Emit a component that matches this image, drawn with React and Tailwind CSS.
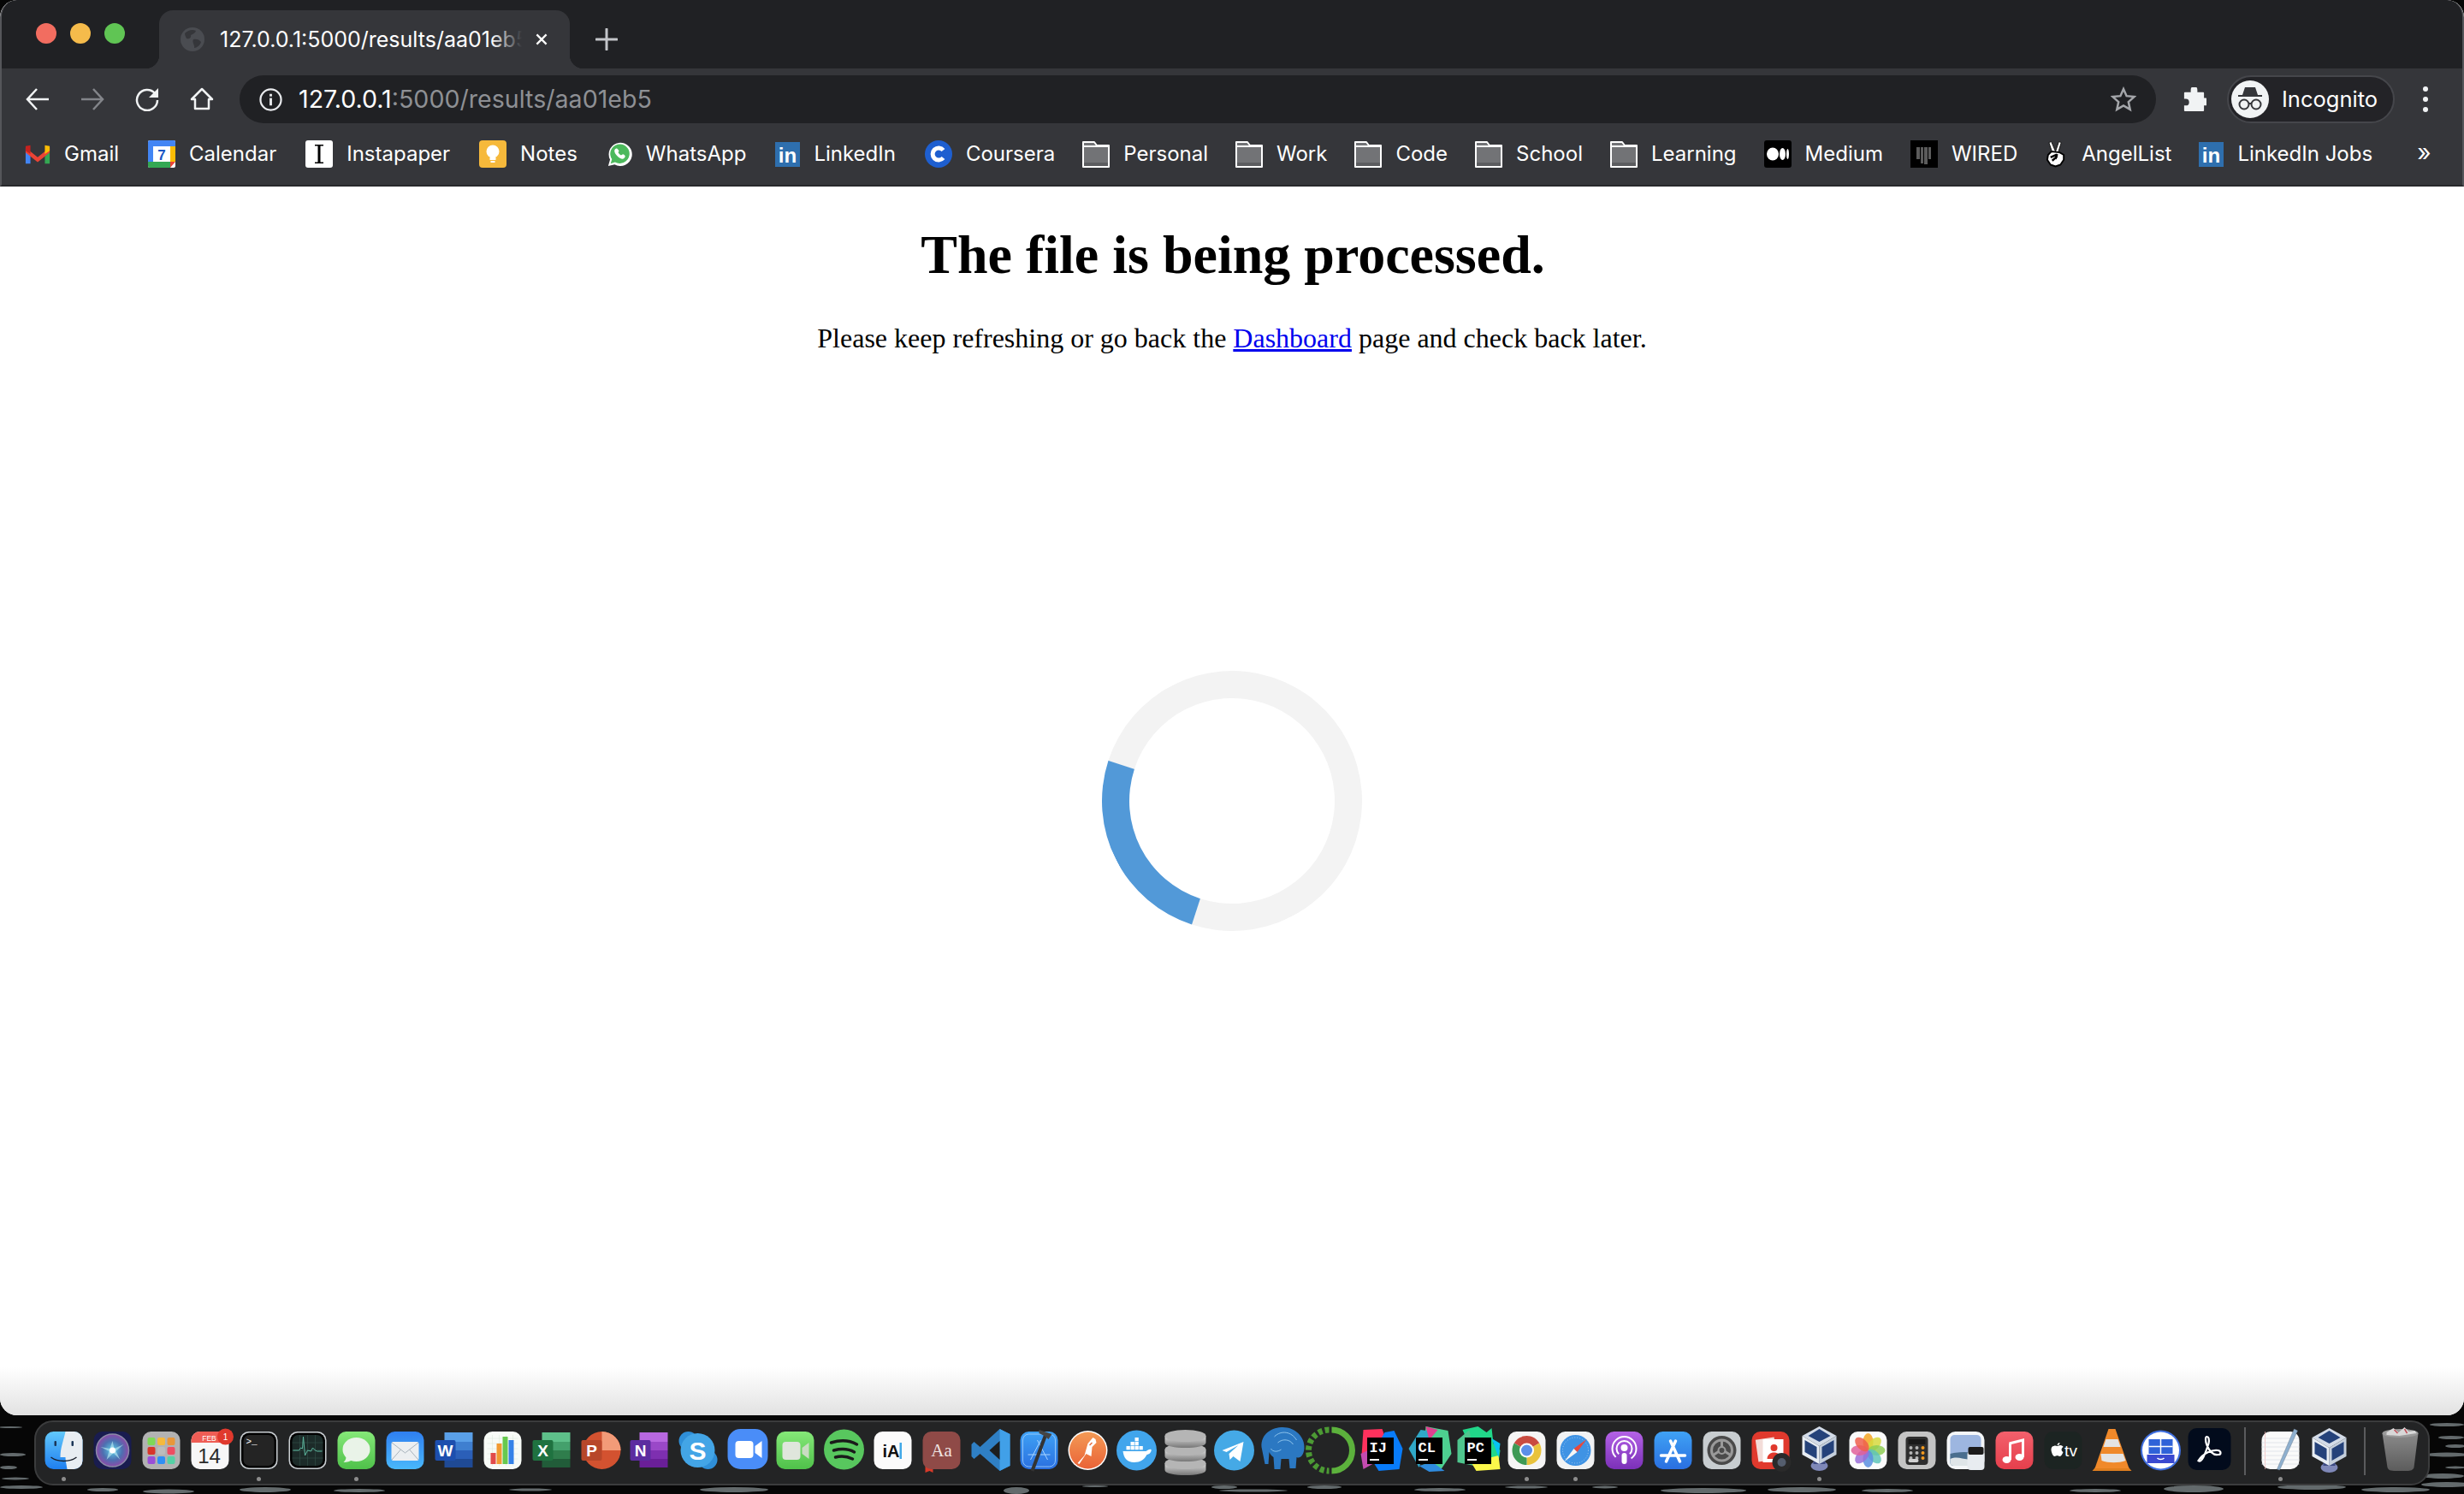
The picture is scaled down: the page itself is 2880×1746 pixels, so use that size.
// App.jsx
import React from "react";

const folder = (
  <svg viewBox="0 0 32 32" className="w-8 h-8">
    <path d="M1 2h13l3 4h14v25H1z" fill="#727376" stroke="#fff" strokeWidth="2" strokeLinejoin="round" />
    <path d="M2 7h28" stroke="#fff" strokeWidth="2" />
    <rect x="2" y="26" width="28" height="4" fill="#5b5c5f" />
  </svg>
);

const linkedin = (
  <svg viewBox="0 0 30 30" className="w-[29px] h-[29px]">
    <rect width="30" height="30" fill="#2e6fae" />
    <text x="15" y="25" textAnchor="middle" fontFamily="Liberation Sans" fontWeight="700" fontSize="25" fill="#fff">in</text>
  </svg>
);

const bookmarks = [
  {
    name: "Gmail",
    icon: (
      <svg viewBox="0 0 32 32" className="w-[30px] h-8">
        <path d="M1 9v19h6V14z" fill="#4285f4" />
        <path d="M31 9v19h-6V14z" fill="#34a853" />
        <path d="M1 8l15 12L31 8v6L16 26 7 19 1 14z" fill="#ea4335" />
        <path d="M25 5l6 1v6l-6 4z" fill="#fbbc04" />
        <path d="M7 5L1 6v6l6 4z" fill="#c5221f" />
      </svg>
    ),
  },
  {
    name: "Calendar",
    icon: (
      <svg viewBox="0 0 32 32" className="w-8 h-8">
        <rect width="32" height="32" rx="2" fill="#fff" />
        <path d="M0 2a2 2 0 012-2h28a2 2 0 012 2v5H0z" fill="#4285f4" />
        <path d="M0 7h6v18H0z" fill="#4285f4" />
        <path d="M26 7h6v18h-6z" fill="#fbbc04" />
        <path d="M0 25h26v7H2a2 2 0 01-2-2z" fill="#34a853" />
        <path d="M26 25h6l-6 7z" fill="#ea4335" />
        <text x="16" y="23" textAnchor="middle" fontFamily="Liberation Sans" fontWeight="700" fontSize="17" fill="#1a56c4">7</text>
      </svg>
    ),
  },
  {
    name: "Instapaper",
    icon: (
      <svg viewBox="0 0 32 32" className="w-8 h-8">
        <rect width="32" height="32" rx="3" fill="#fff" />
        <path d="M11 5h10v1.5h-3.5v19H21V27H11v-1.500h3.500v-19H11z" fill="#000" />
      </svg>
    ),
  },
  {
    name: "Notes",
    icon: (
      <svg viewBox="0 0 32 32" className="w-8 h-8">
        <rect width="32" height="32" rx="4" fill="#f6b93b" />
        <circle cx="16" cy="13" r="7.500" fill="#fff" />
        <rect x="12.500" y="20" width="7" height="3" fill="#fff" />
        <rect x="13.500" y="24" width="5" height="2" fill="#fff" />
      </svg>
    ),
  },
  {
    name: "WhatsApp",
    icon: (
      <svg viewBox="0 0 32 32" className="w-[30px] h-8">
        <path d="M2 31l2.300-8A14.500 14.500 0 1110 29z" fill="#fff" />
        <path d="M5 28l1.700-5.500A12 12 0 1110.500 26z" fill="#4cb95c" />
        <path d="M12 9c-3 1-3 5 1 9s7 5 9 3 1-3 0-4-2-1-3 0-2 0-3-1-2-2-1-3 0-2-1-3-1-1-2-1z" fill="#fff" />
      </svg>
    ),
  },
  { name: "LinkedIn", icon: linkedin },
  {
    name: "Coursera",
    icon: (
      <svg viewBox="0 0 32 32" className="w-8 h-8">
        <circle cx="16" cy="16" r="16" fill="#1e5fd0" />
        <path d="M21.500 20.500a7 7 0 110-9" fill="none" stroke="#fff" strokeWidth="5" />
      </svg>
    ),
  },
  { name: "Personal", icon: folder },
  { name: "Work", icon: folder },
  { name: "Code", icon: folder },
  { name: "School", icon: folder },
  { name: "Learning", icon: folder },
  {
    name: "Medium",
    icon: (
      <svg viewBox="0 0 32 32" className="w-8 h-8">
        <rect width="32" height="32" rx="3" fill="#000" />
        <ellipse cx="10" cy="16" rx="7" ry="7.500" fill="#fff" />
        <ellipse cx="21.500" cy="16" rx="3.500" ry="7" fill="#fff" />
        <ellipse cx="27.500" cy="16" rx="1.500" ry="6" fill="#fff" />
      </svg>
    ),
  },
  {
    name: "WIRED",
    icon: (
      <svg viewBox="0 0 32 32" className="w-8 h-8">
        <rect width="32" height="32" fill="#000" />
        <path d="M7 8h4v14H7zM12 8h3v19h-3zM16 8h4v20h-4zM21 8h3v14h-3z" fill="#5c5c5c" />
      </svg>
    ),
  },
  {
    name: "AngelList",
    icon: (
      <svg viewBox="0 0 28 32" className="w-[27px] h-8">
        <path d="M9 14L5 2l3-1 5 12 4-12 3 1-4 13" fill="#fff" stroke="#111" strokeWidth="1" />
        <path d="M4 17l4-4 10 1 5 3v6l-4 6-6 2-6-2-4-6z" fill="#fff" stroke="#000" strokeWidth="2" />
        <path d="M7 20l7-3M9 24l6-5M15 16l-2 6" stroke="#000" strokeWidth="2.500" fill="none" />
      </svg>
    ),
  },
  { name: "LinkedIn Jobs", icon: linkedin },
];

const R = ({ fill, rx = 10 }) => <rect width="44" height="44" rx={rx} fill={fill} />;
const T = ({ x, y, s, w = 400, c = "#fff", f = "Liberation Sans", a = "middle", children }) => (
  <text x={x} y={y} fontSize={s} fontWeight={w} fill={c} fontFamily={f} textAnchor={a}>
    {children}
  </text>
);

const msStack = (a, b, c, d, front, letter) => (
  <>
    <path d={`M11 1h33v11H11z`} fill={a} />
    <path d="M11 12h33v10H11z" fill={b} />
    <path d="M11 22h33v10H11z" fill={c} />
    <path d="M11 32h33v10H11z" fill={d} />
    <rect x="0" y="10" width="24" height="24" rx="2" fill={front} />
    <T x="12" y="29" s="19" w={700}>{letter}</T>
  </>
);

const jetbrains = (polys, label) => (
  <>
    {polys.map(([points, fill]) => (
      <polygon key={points} points={points} fill={fill} />
    ))}
    <rect x="6.500" y="7" width="31" height="31" fill="#000" />
    <T x="9" y="24" s="17" w={700} a="start" f="Liberation Mono">{label}</T>
    <rect x="9.500" y="32" width="11" height="2" fill="#fff" />
  </>
);

const vbox = (
  <>
    <ellipse cx="22" cy="40" rx="10" ry="6" fill="#7f88b8" />
    <rect x="15" y="32" width="14" height="6" fill="#3d4a83" />
    <polygon points="22,-6 42,5 22,17 2,5" fill="#d4dce8" />
    <polygon points="22,-3 35,5 22,12 9,5" fill="#25427a" />
    <polygon points="2,5 22,17 22,38 2,27" fill="#e8edf3" />
    <polygon points="42,5 22,17 22,38 42,27" fill="#c5cfdc" />
    <polygon points="5,10 19,18 19,32 5,24" fill="#25427a" />
    <polygon points="39,10 25,18 25,32 39,24" fill="#25427a" />
  </>
);

const dockApps = [
  {
    dot: true,
    art: (
      <>
        <R fill="url(#gFinder)" />
        <path d="M24 0h10a10 10 0 0110 10v24a10 10 0 01-10 10h-8c-1-6-2-10-2-14h-6c0-11 4-20 6-30z" fill="#e8edf2" />
        <rect x="11" y="11" width="2.500" height="6" rx="1" fill="#1b3557" />
        <rect x="31" y="11" width="2.500" height="6" rx="1" fill="#1b3557" />
        <path d="M7 30c8 6 22 6 30 0" fill="none" stroke="#1a1f2b" strokeWidth="1.500" />
      </>
    ),
  },
  {
    art: (
      <>
        <R fill="#191c4f" />
        <circle cx="22" cy="22" r="19" fill="url(#gSiri)" stroke="#8b8ba8" strokeWidth="1.500" />
        <path d="M22 11l2 9 11-5-9 8 5 10-8-8-8 8 3-10-10-5 11 2z" fill="#bff0f5" opacity=".6" />
        <circle cx="22" cy="22" r="3.500" fill="#fff" />
      </>
    ),
  },
  {
    art: (
      <>
        <R fill="#b2b2b2" />
        {["#7ed957", "#f5b93c", "#e8973a", "#d8352a", "#bcbcbc", "#ee4d62", "#9a4fd8", "#2f8ff5", "#55d1a5"].map((c, i) => (
          <rect key={c} x={6 + (i % 3) * 11.500} y={7 + Math.floor(i / 3) * 11} width="9" height="9" rx="2" fill={c} />
        ))}
      </>
    ),
  },
  {
    art: (
      <>
        <R fill="#f7f7f7" />
        <path d="M0 13V10A10 10 0 0110 0h24a10 10 0 0110 10v3z" fill="#ee5d55" />
        <T x="21" y="11" s="8.500" w={500}>FEB</T>
        <T x="21" y="37" s="24" c="#2b2b2b">14</T>
        <circle cx="40" cy="6" r="9.500" fill="#e0392d" />
        <T x="40" y="10" s="10">1</T>
      </>
    ),
  },
  {
    dot: true,
    art: (
      <>
        <R fill="#c9ced2" />
        <rect x="1.500" y="1.500" width="41" height="41" rx="9" fill="#000" />
        <rect x="4" y="4" width="36" height="36" rx="7" fill="#242424" />
        <T x="7" y="15" s="11" a="start" f="Liberation Mono">{">_"}</T>
      </>
    ),
  },
  {
    art: (
      <>
        <R fill="#c9ced2" />
        <rect x="1.500" y="1.500" width="41" height="41" rx="9" fill="#000" />
        <rect x="4" y="4" width="36" height="36" rx="7" fill="#1c2b29" />
        <path d="M4 13h36M4 22h36M4 31h36M13 4v36M22 4v36M31 4v36" stroke="#33504a" strokeWidth=".6" />
        <path d="M5 22h7l2-3 2 1 1-14 2 22 3-6 4 1 2-4 3 3 2 1h6" fill="none" stroke="#5db89f" strokeWidth="1" />
      </>
    ),
  },
  {
    dot: true,
    art: (
      <>
        <R fill="url(#gMessages)" />
        <ellipse cx="22" cy="21" rx="16" ry="14" fill="#e9f3e8" />
        <path d="M10 30c0 3-2 5-3 6 4 0 8-1 10-3z" fill="#e9f3e8" />
      </>
    ),
  },
  {
    art: (
      <>
        <R fill="url(#gMail)" />
        <rect x="6" y="12" width="32" height="22" rx="2" fill="#eceff1" />
        <path d="M6.500 13L22 25l15.500-12M6.500 33L17 21M37.500 33L27 21" fill="none" stroke="#a9b4bd" strokeWidth="1" />
      </>
    ),
  },
  { art: msStack("#5aa0e8", "#3f7fd0", "#2b5fb8", "#1f4a95", "#1d4fae", "W") },
  {
    art: (
      <>
        <R fill="#f8fbf7" />
        <path d="M4 8h36M4 14h36M4 20h36M4 26h36M4 32h36M10 4v36M18 4v36M26 4v36M34 4v36" stroke="#d9e6d9" strokeWidth=".5" />
        <rect x="8" y="25" width="6" height="13" fill="#e24b4b" />
        <rect x="15" y="14" width="6" height="24" fill="#f29a32" />
        <rect x="22" y="6" width="6" height="32" fill="#67c94f" />
        <rect x="29" y="10" width="6" height="28" fill="#3582e8" />
      </>
    ),
  },
  { art: msStack("#5ec08a", "#44a06c", "#2f7d4c", "#215c39", "#1f7240", "X") },
  {
    art: (
      <>
        <circle cx="24" cy="22" r="22" fill="#d35230" />
        <path d="M24 0a22 22 0 0122 22H24z" fill="#f29b78" />
        <rect x="0" y="10" width="24" height="24" rx="2" fill="#b7472a" />
        <T x="12" y="29" s="19" w={700}>P</T>
      </>
    ),
  },
  { art: msStack("#b868e0", "#9a48c8", "#7e2fb0", "#6a1f98", "#5c2da0", "N") },
  {
    art: (
      <>
        <circle cx="11" cy="11" r="11" fill="#2f8fd8" />
        <circle cx="34" cy="33" r="11" fill="#2f8fd8" />
        <circle cx="22" cy="22" r="20" fill="#43a5e6" />
        <T x="22" y="33" s="30" w={700}>S</T>
      </>
    ),
  },
  {
    art: (
      <>
        <rect y="-3" width="47" height="47" rx="15" fill="#4a8df8" />
        <rect x="9" y="11" width="21" height="20" rx="4" fill="#fff" />
        <path d="M32 17l8-6v20l-8-6z" fill="#fff" />
      </>
    ),
  },
  {
    art: (
      <>
        <R fill="url(#gMessages)" />
        <rect x="7" y="12" width="21" height="21" rx="4" fill="#dfe6dc" />
        <path d="M30 19l8-6v19l-8-6z" fill="#c9dcc2" />
      </>
    ),
  },
  {
    art: (
      <>
        <circle cx="22" cy="21" r="23.500" fill="#58c75e" />
        <path d="M7 13c10-3 21-3 30 2M10 22c8-2 17-2 24 2M12 30c7-2 14-1 20 2" fill="none" stroke="#1a1a1a" strokeWidth="3.500" strokeLinecap="round" />
      </>
    ),
  },
  {
    art: (
      <>
        <R fill="#fbfbfb" />
        <T x="20" y="30" s="20" w={700} c="#111">iA</T>
        <rect x="30" y="13" width="2.500" height="19" fill="#40a8e8" />
      </>
    ),
  },
  {
    art: (
      <>
        <path d="M3 40h9v8l-4-2-5 2z" fill="#d83a2a" />
        <R fill="#8f4a47" />
        <T x="22" y="29" s="21" f="Liberation Serif" c="#efe3e0">Aa</T>
      </>
    ),
  },
  {
    art: (
      <>
        <path d="M33 -3l12 6v37l-12 6L10 26 3 32l-3-3v-14l3-3 7 6z" fill="#2f7fc4" />
        <path d="M33 -3l12 6v37l-12 6z" fill="#41a0e8" />
        <path d="M33 11L21 22l12 11z" fill="#1c1d1e" />
      </>
    ),
  },
  {
    art: (
      <>
        <R fill="url(#gApp)" />
        <rect x="3" y="3" width="38" height="38" rx="7" fill="none" stroke="#a8d4ff" strokeWidth=".8" />
        <path d="M12 33L24 10M32 33L20 10M9 27h26" stroke="#a8d4ff" strokeWidth="1" fill="none" />
        <path d="M14 46L30 3" stroke="#333" strokeWidth="4" />
        <path d="M22 -2l15 5-4 6-5-4-6-3z" fill="#444" />
      </>
    ),
  },
  {
    art: (
      <>
        <circle cx="22" cy="22" r="23" fill="#fff" />
        <circle cx="22" cy="22" r="21.500" fill="url(#gPostman)" />
        <path d="M10 37l8-9 4-14 6-7 3 2 1 4-5 5-1 11-6-3-8 12z" fill="#fff" />
        <path d="M24 16l3-3" stroke="#e86a3a" strokeWidth="1.500" />
      </>
    ),
  },
  {
    art: (
      <>
        <circle cx="22" cy="22" r="23.500" fill="#41a5ec" />
        <path d="M6 23h27c2-1 4-3 6-2 1 2-2 6-5 6-3 6-8 9-15 9-8 0-12-5-13-13z" fill="#fff" />
        {[[10, 17], [15, 17], [20, 17], [25, 17], [15, 12], [20, 12], [20, 7]].map(([x, y]) => (
          <rect key={`${x}-${y}`} x={x} y={y} width="4.300" height="4.300" fill="#fff" />
        ))}
      </>
    ),
  },
  {
    art: (
      <>
        {[34, 18, 2].map((y) => (
          <g key={y}>
            <path d={`M-2 ${y + 3}v8c0 8 48 8 48 0v-8z`} fill="url(#gDb)" />
            <ellipse cx="22" cy={y + 3} rx="24" ry="7" fill="#b5b5b5" />
          </g>
        ))}
      </>
    ),
  },
  {
    art: (
      <>
        <circle cx="22" cy="22" r="23.500" fill="#45a9e6" />
        <path d="M8 22l25-10-4 23-8-6-4 4-1-7 11-10-14 8z" fill="#fff" />
      </>
    ),
  },
  {
    art: (
      <>
        <path d="M-3 18C-4 2 10-5 22-5c14 0 26 11 25 25-1 8-5 12-9 10l-1 13h-7l-1-11h-9l-1 12h-7l-1-14c-3-2-4-4-5-6l-1 14H1z" fill="#2b78c2" />
        <path d="M12 6c8-8 20-6 26 4M16 13c6-5 14-4 18 2M8 20c2 4 8 4 12 1" fill="none" stroke="#8fc5ec" strokeWidth="1" />
      </>
    ),
  },
  {
    art: (
      <>
        <path d="M22 -2a24 24 0 110 48" fill="none" stroke="#5cb13c" strokeWidth="7" />
        <path d="M19 -2a24 24 0 000 48" fill="none" stroke="#4c9a34" strokeWidth="7" strokeDasharray="5 3" />
      </>
    ),
  },
  {
    art: jetbrains(
      [
        ["2,-2 24,-3 30,14 0,28", "#fe315d"],
        ["27,1 38,-1 48,20 44,44 20,46 10,30", "#087cfa"],
        ["-1,26 12,20 20,34 2,44", "#c44bb0"],
      ],
      "IJ"
    ),
  },
  {
    art: jetbrains(
      [
        ["18,-6 44,-1 48,26 36,44 14,38", "#4dd090"],
        ["-2,20 12,-2 26,0 10,42", "#2fa8c8"],
        ["18,-6 32,-2 22,10", "#e0408f"],
        ["10,40 26,36 40,46 22,47", "#2f8ce0"],
      ],
      "CL"
    ),
  },
  {
    art: jetbrains(
      [
        ["4,-2 22,-6 32,1 38,-4 40,14 48,22 46,36 20,34", "#21d789"],
        ["-2,10 12,-2 18,40 -2,36", "#4fc68e"],
        ["14,36 46,28 48,44 20,46", "#fcf84a"],
        ["38,8 48,14 46,30", "#07c3f2"],
      ],
      "PC"
    ),
  },
  {
    dot: true,
    art: (
      <>
        <R fill="#f5f5f5" />
        <path d="M22 22L7.300 13.500a17 17 0 0129.400 0z" fill="#c94b40" />
        <path d="M22 22l14.700-8.500A17 17 0 0122 39z" fill="#e9c33d" />
        <path d="M22 22v17A17 17 0 017.300 13.500z" fill="#3e9a55" />
        <circle cx="22" cy="22" r="8.500" fill="#fff" />
        <circle cx="22" cy="22" r="6.500" fill="#5b8fe8" />
      </>
    ),
  },
  {
    dot: true,
    art: (
      <>
        <R fill="#f1f2f3" />
        <circle cx="22" cy="22" r="18" fill="#3f93e4" />
        <circle cx="22" cy="22" r="15" fill="none" stroke="#9fcbf3" strokeWidth="1" strokeDasharray="1 2" />
        <polygon points="35,9 24,24 20,20" fill="#e8483c" />
        <polygon points="9,35 24,24 20,20" fill="#f5f5f5" />
      </>
    ),
  },
  {
    art: (
      <>
        <R fill="url(#gPodcast)" />
        <circle cx="22" cy="20" r="14" fill="none" stroke="#fff" strokeWidth="2" strokeDasharray="68 20" transform="rotate(135 22 20)" />
        <circle cx="22" cy="20" r="9" fill="none" stroke="#fff" strokeWidth="2" strokeDasharray="42 15" transform="rotate(135 22 20)" />
        <circle cx="22" cy="19" r="4" fill="#fff" />
        <rect x="19" y="25" width="6" height="13" rx="3" fill="#fff" />
      </>
    ),
  },
  {
    art: (
      <>
        <R fill="url(#gApp)" />
        <path d="M14 35L25 11M30 35L19 11M8 28h28" stroke="#fff" strokeWidth="3.500" strokeLinecap="round" fill="none" />
      </>
    ),
  },
  {
    art: (
      <>
        <R fill="#c8cdd0" />
        <circle cx="22" cy="22" r="17" fill="#4a4a4a" />
        <circle cx="22" cy="22" r="12" fill="none" stroke="#9a9a9a" strokeWidth="3" />
        <path d="M22 10v8M11 28l8-5M33 28l-8-5" stroke="#9a9a9a" strokeWidth="3" />
        <circle cx="22" cy="22" r="4" fill="none" stroke="#9a9a9a" strokeWidth="2" />
      </>
    ),
  },
  {
    art: (
      <>
        <R fill="#e0392d" />
        <rect x="6" y="8" width="22" height="26" fill="#f3dcd8" transform="rotate(-8 17 21)" />
        <rect x="13" y="9" width="24" height="27" fill="#fff" />
        <circle cx="26" cy="19" r="4" fill="#e0392d" />
        <path d="M18 32c0-10 16-10 16 0z" fill="#e0392d" />
        <circle cx="35" cy="36" r="11" fill="#2a2a2a" />
        <circle cx="35" cy="36" r="5" fill="#555e6e" />
      </>
    ),
  },
  { dot: true, art: vbox },
  {
    art: (
      <>
        <R fill="#fbfbfb" />
        {[["#f5a623", 0], ["#d7d93e", 45], ["#8fce55", 90], ["#5fc4b8", 135], ["#5a8fe0", 180], ["#9a6dd8", 225], ["#e0609a", 270], ["#ee5f4c", 315]].map(([c, r]) => (
          <ellipse key={c} cx="22" cy="12" rx="6" ry="10" fill={c} opacity=".85" transform={`rotate(${r} 22 22)`} />
        ))}
      </>
    ),
  },
  {
    art: (
      <>
        <R fill="#c4c4c4" />
        <rect x="9" y="6" width="26" height="33" rx="4" fill="#2e2e2e" />
        <rect x="12" y="9" width="20" height="6" fill="#1a1a1a" />
        {[0, 1, 2].map((r) =>
          [0, 1, 2].map((c) => <circle key={`${r}${c}`} cx={15 + c * 7} cy={19 + r * 6} r="2" fill={c === 2 ? "#f39a1f" : "#b5b5b5"} />)
        )}
        <rect x="12" y="32" width="12" height="4" rx="2" fill="#d0d0d0" />
      </>
    ),
  },
  {
    art: (
      <>
        <R fill="#f4f6f8" />
        <rect x="4" y="4" width="36" height="36" rx="5" fill="#9db6e0" />
        <path d="M4 26c12-3 24-2 36 0v10a4 4 0 01-4 4H8a4 4 0 01-4-4z" fill="#4a6e8e" />
        <path d="M4 32c10-4 16 2 24 0v8H8a4 4 0 01-4-4z" fill="#dfe5e8" />
        <rect x="24" y="23" width="20" height="22" rx="4" fill="#e8ecf0" />
        <rect x="25" y="18" width="18" height="9" rx="2" fill="#1b1b1b" />
      </>
    ),
  },
  {
    art: (
      <>
        <R fill="url(#gMusic)" />
        <path d="M16 14l16-4v20" fill="none" stroke="#fff" strokeWidth="3" />
        <path d="M17 14v19" stroke="#fff" strokeWidth="3" />
        <ellipse cx="13" cy="33" rx="5" ry="4" fill="#fff" />
        <ellipse cx="28" cy="30" rx="5" ry="4" fill="#fff" />
      </>
    ),
  },
  {
    art: (
      <>
        <R fill="#1c2422" />
        <path d="M11 17c2-1 3 0 4 0s2-1 4-1c1 0 3 1 3 2-3 2-2 5 0 6-1 3-3 5-4 5s-2-1-3-1-2 1-3 1c-2 0-4-5-4-8 0-2 1-4 3-4zM15 16c0-2 2-3 3-3 0 2-1 3-3 3z" fill="#fff" />
        <T x="31" y="29" s="19">tv</T>
      </>
    ),
  },
  {
    art: (
      <>
        <path d="M-1 46l7-8h32l7 8z" fill="#e07f1f" />
        <path d="M18 -3h8l16 46H2z" fill="#f0892a" />
        <path d="M15 9h14l3 9H12z" fill="#e4e4e4" />
        <path d="M9 26h26l3 8c-8 3-20 3-28 0z" fill="#e4e4e4" />
      </>
    ),
  },
  {
    art: (
      <>
        <circle cx="22" cy="22" r="23.500" fill="#3f6fe0" />
        <circle cx="22" cy="22" r="21.500" fill="#fff" />
        <path d="M8 9h28v17H8z" fill="#2f62d8" />
        <path d="M22 9v17M8 17.500h28" stroke="#fff" strokeWidth="1.500" />
        <path d="M6 27h32v10H6z" fill="#3a49d0" />
        <path d="M18 31c2 2 6 2 8 0" stroke="#fff" strokeWidth="1.500" fill="none" />
      </>
    ),
  },
  {
    art: (
      <>
        <rect x="-3" y="-4" width="50" height="49" rx="10" fill="#020b1c" />
        <path d="M9 34c4 3 8-8 12-20 1-5 0-8-2-8s-2 5 0 10c3 7 7 12 13 11 4 0 4-4 0-5-7-1-17 3-23 12z" fill="none" stroke="#fff" strokeWidth="2.200" />
      </>
    ),
  },
  { sep: true },
  {
    dot: true,
    art: (
      <>
        <R fill="#fafafa" />
        <path d="M4 0v44" stroke="#f0b5b5" strokeWidth=".7" />
        {[8, 13, 18, 23, 28, 33, 38].map((y) => (
          <path key={y} d={`M0 ${y}h44`} stroke="#dcdfe6" strokeWidth=".8" />
        ))}
        <path d="M18 44L38 -3l4 2-21 46z" fill="#8fb0cf" stroke="#6d7f90" strokeWidth=".5" />
      </>
    ),
  },
  { art: <g transform="translate(0 2)">{vbox}</g> },
  { sep: true },
  {
    art: (
      <>
        <path d="M1 2h42l-5 40c-1 3-4 4-8 4H15c-4 0-7-1-8-4z" fill="url(#gTrash)" />
        <ellipse cx="22" cy="2" rx="21" ry="5" fill="#9a9a9a" />
        <path d="M6 1l8-5 6 5 7-6 5 5 7-1 2 3-20 3-15-1z" fill="#d8d8d8" />
        <path d="M15 -2l4 4M27 -3l3 5" stroke="#c0505a" strokeWidth="1.500" />
      </>
    ),
  },
];

const wisps = [
  [12, 1668, 14, 1], [15, 1700, 15, 2], [10, 1715, 10, 2], [18, 1728, 16, 1.5], [25, 1738, 25, 2],
  [120, 1741, 18, 2], [197, 1743, 30, 2.5], [310, 1741, 30, 3], [420, 1742, 30, 2], [620, 1741, 25, 1.5],
  [858, 1741, 40, 3], [1188, 1742, 15, 4], [1280, 1737, 15, 1], [1431, 1738, 15, 2], [1465, 1742, 40, 1.5],
  [1548, 1738, 20, 2], [1683, 1741, 30, 2], [1784, 1738, 25, 1.5], [1876, 1738, 15, 1.5], [1991, 1742, 50, 3],
  [2106, 1741, 40, 3], [2206, 1742, 30, 2], [2449, 1742, 30, 2], [2564, 1740, 35, 4], [2702, 1738, 40, 3],
  [2800, 1741, 40, 3], [2860, 1665, 20, 2], [2865, 1680, 15, 2], [2870, 1690, 12, 2], [2860, 1700, 25, 2.5],
  [2870, 1715, 12, 1.5], [2855, 1725, 25, 3], [2860, 1735, 30, 3],
];

function Defs() {
  const grad = (id, a, b) => (
    <linearGradient id={id} x1="0" y1="0" x2="0" y2="1">
      <stop offset="0" stopColor={a} />
      <stop offset="1" stopColor={b} />
    </linearGradient>
  );
  return (
    <svg className="absolute w-0 h-0">
      <defs>
        {grad("gFinder", "#62c8fb", "#1f7ff0")}
        {grad("gMessages", "#85e878", "#4fc14a")}
        {grad("gMail", "#2f7ff0", "#49b8fb")}
        {grad("gApp", "#3fa2f5", "#2a6fe0")}
        {grad("gPostman", "#f39a55", "#ea6337")}
        {grad("gPodcast", "#b462e6", "#7b30b8")}
        {grad("gMusic", "#f3606c", "#e53f4c")}
        {grad("gDb", "#dcdcdc", "#777")}
        {grad("gTrash", "#8a8a8a", "#5c5c5c")}
        <radialGradient id="gSiri">
          <stop offset="0" stopColor="#5ed0e8" />
          <stop offset=".6" stopColor="#4d6fb0" />
          <stop offset="1" stopColor="#8c4aa8" />
        </radialGradient>
      </defs>
    </svg>
  );
}

function Bookmark({ b }) {
  return (
    <div className="flex items-center gap-4">
      {b.icon}
      <span>{b.name}</span>
    </div>
  );
}

function ChromeTop() {
  return (
    <div className="shrink-0 rounded-t-[20px] overflow-hidden border-x-2 border-[#55565a] border-b-2 border-b-[#27282b] bg-[#35363a] text-white font-['Inter',sans-serif]">
      {/* tab strip */}
      <div className="h-[80px] bg-[#202124] flex">
        <div className="w-[184px] pl-[40px] pt-[27px] flex gap-4 shrink-0">
          <span className="w-6 h-6 rounded-full bg-[#f26d60]" />
          <span className="w-6 h-6 rounded-full bg-[#f5bb4b]" />
          <span className="w-6 h-6 rounded-full bg-[#60c554]" />
        </div>
        <div className="relative mt-3 w-[480px] h-[68px] bg-[#35363a] rounded-t-2xl flex items-center pl-[25px] before:content-[''] before:absolute before:bottom-0 before:-left-4 before:w-4 before:h-4 before:bg-[radial-gradient(circle_at_0_0,transparent_16px,#35363a_16.500px)] after:content-[''] after:absolute after:bottom-0 after:-right-4 after:w-4 after:h-4 after:bg-[radial-gradient(circle_at_100%_0,transparent_16px,#35363a_16.500px)]">
          <svg viewBox="0 0 28 28" className="w-7 h-7 shrink-0">
            <circle cx="14" cy="14" r="14" fill="#4a4c51" />
            <path d="M5 7c4-4 9-5 13-3-1 3-4 4-6 5 1 3-2 5-5 4-1-2-2-4-2-6zM15 14c3-1 7 0 9 3-1 4-5 7-8 7 1-3-3-7-1-10z" fill="#35363a" />
          </svg>
          <div className="relative ml-[18px] w-[353px] overflow-hidden whitespace-nowrap text-[25px] leading-[32px]">
            127.0.0.1:5000/results/aa01eb5
            <span className="absolute right-0 top-0 bottom-0 w-9 bg-gradient-to-r from-transparent to-[#35363a]" />
          </div>
          <svg viewBox="0 0 20 20" className="w-4 h-4 ml-[15px] shrink-0">
            <path d="M3 3l14 14M17 3L3 17" stroke="#fff" strokeWidth="2.800" />
          </svg>
        </div>
        <div className="ml-[30px] pt-[33px]">
          <svg viewBox="0 0 26 26" className="w-[26px] h-[26px]">
            <path d="M13 1v24M1 13h24" stroke="#c3c5c9" strokeWidth="3" strokeLinecap="round" />
          </svg>
        </div>
      </div>
      {/* toolbar */}
      <div className="h-[64px] pt-2 pl-[10px] pr-[11px] flex">
        <div className="w-16 h-14 flex items-center justify-center">
          <svg viewBox="0 0 28 28" className="w-7 h-7">
            <path d="M27 14H2M13 2L2 14l11 12" fill="none" stroke="#f1f3f4" strokeWidth="2.500" />
          </svg>
        </div>
        <div className="w-16 h-14 flex items-center justify-center">
          <svg viewBox="0 0 28 28" className="w-7 h-7">
            <path d="M1 14h25M15 2l11 12-11 12" fill="none" stroke="#83858a" strokeWidth="2.500" />
          </svg>
        </div>
        <div className="w-16 h-14 flex items-center justify-center">
          <svg viewBox="0 0 28 28" className="w-7 h-7">
            <path d="M23 7A12 12 0 1026 15" fill="none" stroke="#f1f3f4" strokeWidth="2.500" />
            <path d="M27 1v11H16z" fill="#f1f3f4" />
          </svg>
        </div>
        <div className="w-16 h-14 flex items-center justify-center">
          <svg viewBox="0 0 28 28" className="w-7 h-7">
            <path d="M14 2L2 14h4v11h16V14h4z" fill="none" stroke="#f1f3f4" strokeWidth="2.500" strokeLinejoin="round" />
          </svg>
        </div>
        <div className="ml-3 flex-1 h-14 rounded-full bg-[#202124] flex items-center pl-[23px] pr-[23px]">
          <svg viewBox="0 0 28 28" className="w-[27px] h-[27px] shrink-0">
            <circle cx="14" cy="14" r="12.500" fill="none" stroke="#e8eaed" strokeWidth="2.300" />
            <rect x="12.500" y="12" width="3" height="9" fill="#e8eaed" />
            <rect x="12.500" y="7" width="3" height="3" fill="#e8eaed" />
          </svg>
          <div className="ml-[19px] text-[28.6px] text-white">
            127.0.0.1<span className="text-[#8e9094]">:5000/results/aa01eb5</span>
          </div>
          <svg viewBox="0 0 30 30" className="ml-auto w-[30px] h-[30px]">
            <path d="M15 3l3.600 8.200 8.900.9-6.700 6 1.900 8.800L15 22.400l-7.700 4.500 1.900-8.800-6.700-6 8.900-.9z" fill="none" stroke="#a4a6aa" strokeWidth="2.500" />
          </svg>
        </div>
        <div className="ml-3 w-16 h-14 flex items-center justify-center">
          <svg viewBox="0 0 30 30" className="w-[29px] h-[29px]">
            <path d="M11 3a4 4 0 018 0v3h7a1 1 0 011 1v6h2a4.500 4.500 0 010 9h-2v6a1 1 0 01-1 1H4a1 1 0 01-1-1v-6h2a4 4 0 000-8H3V7a1 1 0 011-1h7z" fill="#f1f3f4" />
          </svg>
        </div>
        <div className="ml-[7px] w-[196px] h-14 rounded-full bg-[#232327] border-2 border-[#45464b] flex items-center pl-[3px]">
          <svg viewBox="0 0 44 44" className="w-11 h-11 shrink-0">
            <circle cx="22" cy="22" r="22" fill="#f1f3f4" />
            <path d="M13 17l3-9h12l3 9z" fill="#35363a" />
            <path d="M8 18h28" stroke="#35363a" strokeWidth="2" />
            <circle cx="15" cy="28" r="5.500" fill="none" stroke="#35363a" strokeWidth="2" />
            <circle cx="29" cy="28" r="5.500" fill="none" stroke="#35363a" strokeWidth="2" />
            <path d="M20 27h4" stroke="#35363a" strokeWidth="2" />
          </svg>
          <span className="ml-[15px] text-[25.5px]">Incognito</span>
        </div>
        <div className="ml-1 w-16 h-14 flex flex-col items-center justify-center gap-[6px]">
          <span className="w-[6px] h-[6px] rounded-full bg-[#f1f3f4]" />
          <span className="w-[6px] h-[6px] rounded-full bg-[#f1f3f4]" />
          <span className="w-[6px] h-[6px] rounded-full bg-[#f1f3f4]" />
        </div>
      </div>
      {/* bookmarks */}
      <div className="h-[72px] pl-[27px] flex items-center text-[24px] whitespace-nowrap">
        <div className="flex items-center gap-[34px]">
          {bookmarks.slice(0, 7).map((b) => (
            <Bookmark key={b.name} b={b} />
          ))}
        </div>
        <div className="ml-8 flex items-center gap-8">
          {bookmarks.slice(7).map((b) => (
            <Bookmark key={b.name} b={b} />
          ))}
        </div>
        <span className="ml-[52px] text-[28px] pb-1">»</span>
      </div>
    </div>
  );
}

function Dock() {
  return (
    <div className="relative ml-[40px] mt-[6px] w-[2800px] h-[76px] rounded-[22px] border-2 border-[#3b3c3d] bg-[#232425] pt-1 pl-[4px] flex">
      {dockApps.map((app, i) =>
        app.sep ? (
          <div key={i} className="mx-[12px] mt-[2px] w-[2px] h-[56px] bg-[#5a5b5d]" />
        ) : (
          <div key={i} className="w-[57px] shrink-0 flex flex-col items-center">
            <svg viewBox="0 0 57 56" className="w-[57px] h-[56px] overflow-visible">
              <g transform="translate(6.500 7)">{app.art}</g>
            </svg>
            {app.dot && <span className="mt-1 w-[5px] h-[5px] rounded-full bg-[#8c8c8c]" />}
          </div>
        )
      )}
    </div>
  );
}

export default function App() {
  return (
    <div className="relative w-[2880px] h-[1746px] overflow-hidden bg-[#060606]">
      <Defs />
      {/* wallpaper */}
      <svg viewBox="0 0 2880 1746" className="absolute inset-0 w-[2880px] h-[1746px]">
        {wisps.map(([cx, cy, rx, ry]) => (
          <ellipse key={`${cx}-${cy}`} cx={cx} cy={cy} rx={rx} ry={ry} fill="#8b9599" opacity=".7" />
        ))}
      </svg>
      <div className="relative h-[1654px] rounded-[20px] overflow-hidden bg-white flex flex-col">
        <ChromeTop />
        <main className="flex-1 flex flex-col items-center font-['Liberation_Serif',serif] text-black">
          <h1 className="mt-[43px] ml-[2px] text-[64px] leading-[73px] font-bold">The file is being processed.</h1>
          <p className="mt-[43px] text-[32px] leading-[37px]">
            Please keep refreshing or go back the{" "}
            <a href="#" className="text-[#0000ee] underline">Dashboard</a> page and check back later.
          </p>
          <div className="mt-[370px] w-[304px] h-[304px] rounded-full border-[32px] border-[#f3f3f3] border-l-[#5299d8] rotate-[-27deg]" />
          <div className="mt-auto w-full h-[56px] bg-gradient-to-b from-white to-[#e2e2e2]" />
        </main>
      </div>
      <Dock />
    </div>
  );
}
